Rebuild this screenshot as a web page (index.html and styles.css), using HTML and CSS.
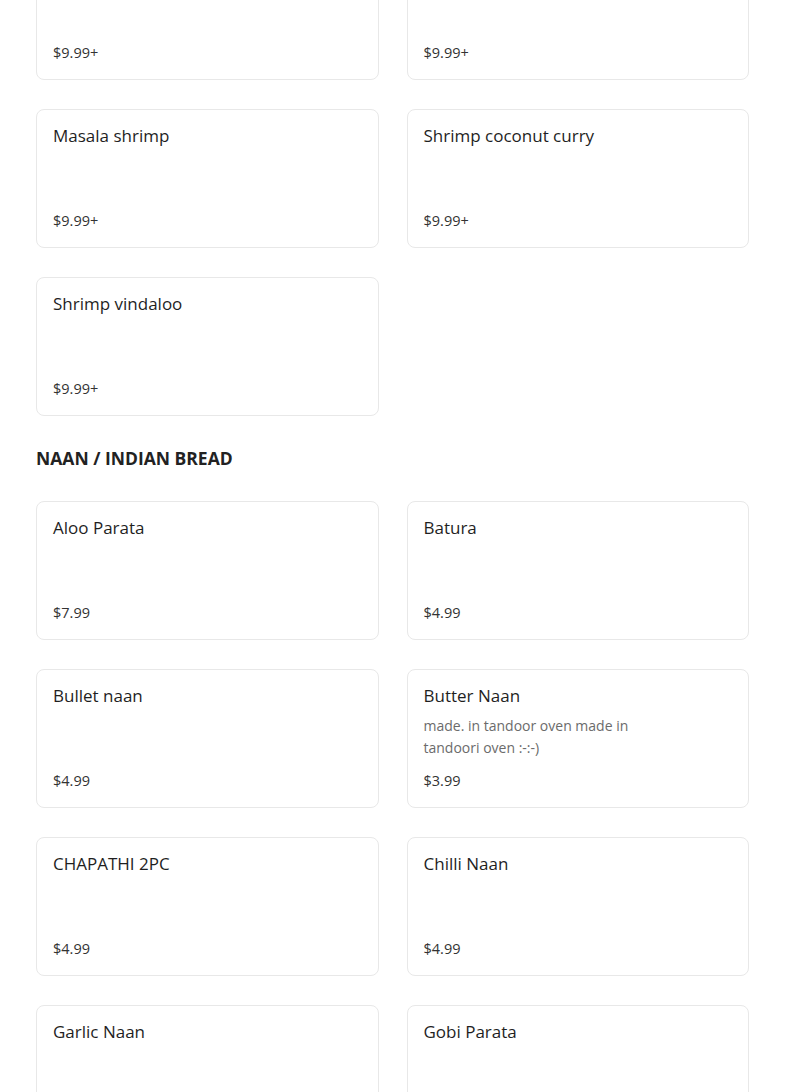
FILE: index.html
```html
<!DOCTYPE html>
<html lang="en">
<head>
<meta charset="utf-8">
<link rel="stylesheet" href="styles.css">
</head>
<body>
<main class="menu">
  <section class="section section-first">
    <div class="grid">
      <div class="card"><div class="info"></div><div class="price">$9.99+</div></div>
      <div class="card"><div class="info"></div><div class="price">$9.99+</div></div>
      <div class="card"><div class="info"><div class="name">Masala shrimp</div></div><div class="price">$9.99+</div></div>
      <div class="card"><div class="info"><div class="name">Shrimp coconut curry</div></div><div class="price">$9.99+</div></div>
      <div class="card"><div class="info"><div class="name">Shrimp vindaloo</div></div><div class="price">$9.99+</div></div>
    </div>
  </section>
  <section class="section">
    <h2 class="section-title">NAAN / INDIAN BREAD</h2>
    <div class="grid">
      <div class="card"><div class="info"><div class="name">Aloo Parata</div></div><div class="price">$7.99</div></div>
      <div class="card"><div class="info"><div class="name">Batura</div></div><div class="price">$4.99</div></div>
      <div class="card"><div class="info"><div class="name">Bullet naan</div></div><div class="price">$4.99</div></div>
      <div class="card"><div class="info"><div class="name">Butter Naan</div><div class="desc">made. in tandoor oven made in tandoori oven :-:-)</div></div><div class="price">$3.99</div></div>
      <div class="card"><div class="info"><div class="name">CHAPATHI 2PC</div></div><div class="price">$4.99</div></div>
      <div class="card"><div class="info"><div class="name">Chilli Naan</div></div><div class="price">$4.99</div></div>
      <div class="card"><div class="info"><div class="name">Garlic Naan</div></div><div class="price">$4.99</div></div>
      <div class="card"><div class="info"><div class="name">Gobi Parata</div></div><div class="price">$7.99</div></div>
    </div>
  </section>
</main>
</body>
</html>
```
FILE: styles.css
```css
* { box-sizing: border-box; }
html, body { margin: 0; padding: 0; background: #fff; }
body {
  font-family: "Open Sans", "Liberation Sans", sans-serif;
  color: #222;
}
.menu { padding: 0 36px; }
.section-first { margin-top: -59px; }
.section-title {
  margin: 28px 0 29px;
  font-size: 17.5px;
  line-height: 28px;
  font-weight: 700;
  color: #222;
}
.grid {
  display: grid;
  grid-template-columns: 1fr 1fr;
  column-gap: 28px;
  row-gap: 29px;
}
.card {
  display: flex;
  flex-direction: column;
  justify-content: space-between;
  min-height: 139px;
  padding: 16px;
  border: 1px solid #e8e8e8;
  border-radius: 8px;
  background: #fff;
}
.name {
  font-size: 17px;
  line-height: 20px;
  font-weight: 500;
  color: #1f1f1f;
}
.desc {
  margin-top: 9px;
  font-size: 14px;
  line-height: 22px;
  color: #6b6b6b;
  max-width: 240px;
}
.price {
  margin-top: 10px;
  font-size: 14.5px;
  line-height: 20px;
  color: #333;
}
```
